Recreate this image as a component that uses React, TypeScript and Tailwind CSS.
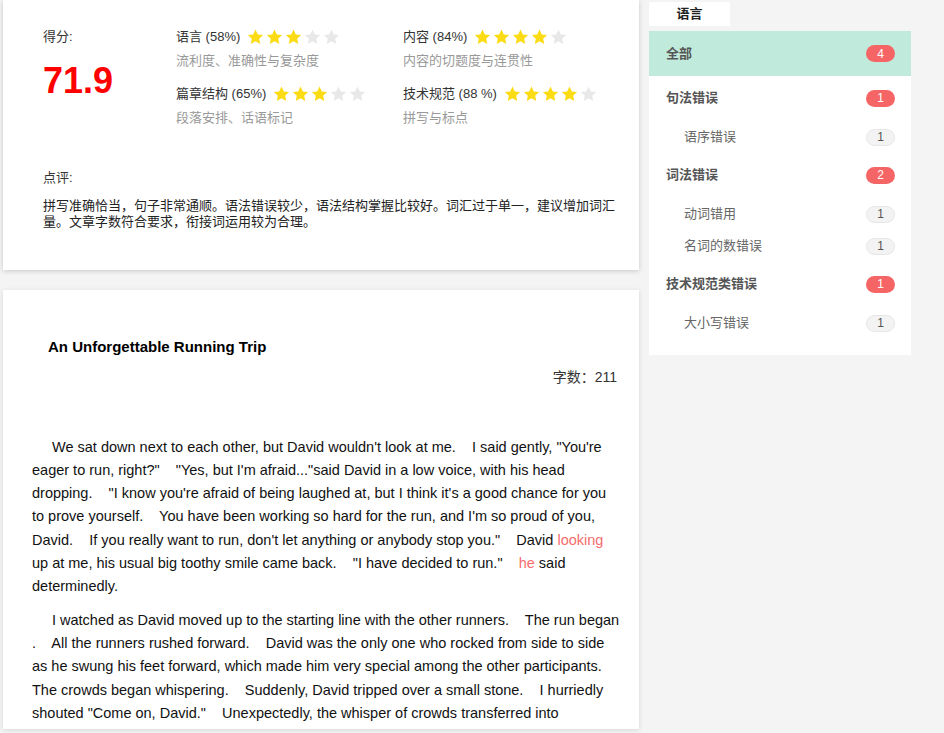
import React from 'react';

const cjk = { fontFamily: '"Liberation Sans", "Noto Sans CJK SC", sans-serif' };

function Star({ on }: { on: boolean }) {
  return (
    <svg width="17" height="16" viewBox="0 0 24 23" className="shrink-0">
      <path
        d="M12 0.8l3.3 7 7.6 0.9-5.6 5.2 1.5 7.6L12 17.7l-6.8 3.8 1.5-7.6L1.1 8.7l7.6-0.9z"
        fill={on ? '#fadb14' : '#e8e8e8'}
      />
    </svg>
  );
}

function Rating({ label, sub, n }: { label: string; sub: string; n: number }) {
  return (
    <div className="flex flex-col">
      <div className="flex items-center gap-[7px]">
        <span className="text-[13px] text-[#333]">{label}</span>
        <div className="flex gap-[2px]">
          {[0, 1, 2, 3, 4].map((i) => (
            <Star key={i} on={i < n} />
          ))}
        </div>
      </div>
      <div className="text-[13px] text-[#999] mt-[4px]">{sub}</div>
    </div>
  );
}

type Item = { name: string; count: number; level: 1 | 2 };

const items: Item[] = [
  { name: '句法错误', count: 1, level: 1 },
  { name: '语序错误', count: 1, level: 2 },
  { name: '词法错误', count: 2, level: 1 },
  { name: '动词错用', count: 1, level: 2 },
  { name: '名词的数错误', count: 1, level: 2 },
  { name: '技术规范类错误', count: 1, level: 1 },
  { name: '大小写错误', count: 1, level: 2 },
];

function Badge({ count, red }: { count: number; red: boolean }) {
  return (
    <span
      className={
        red
          ? 'w-[29px] h-[17px] rounded-full bg-[#f56565] text-white text-[12px] flex items-center justify-center'
          : 'w-[29px] h-[17px] rounded-full bg-[#f3f3f3] border border-[#e6e6e6] text-[#555] text-[12px] flex items-center justify-center'
      }
    >
      {count}
    </span>
  );
}

const sp = '\u00a0\u00a0\u00a0 ';

export default function App() {
  return (
    <div className="min-h-screen w-[944px] bg-[#f4f4f4] flex items-start" style={cjk}>
      <div className="ml-[3px] w-[636px] flex flex-col">
        <div className="bg-white h-[270px] shadow-[0_1px_5px_rgba(0,0,0,0.18)] pl-[40px] pr-[20px] pt-[27px]">
          <div className="flex">
            <div className="w-[133px] flex flex-col">
              <div className="text-[13px] text-[#333]">得分:</div>
              <div
                className="text-[36px] font-bold text-[#ff0000] mt-[16px] leading-none"
                style={{ fontFamily: '"Liberation Sans", Arial, sans-serif' }}
              >
                71.9
              </div>
            </div>
            <div className="grid grid-cols-[227px_1fr] gap-y-[14px]">
              <Rating label="语言 (58%)" sub="流利度、准确性与复杂度" n={3} />
              <Rating label="内容 (84%)" sub="内容的切题度与连贯性" n={4} />
              <Rating label="篇章结构 (65%)" sub="段落安排、话语标记" n={3} />
              <Rating label="技术规范 (88 %)" sub="拼写与标点" n={4} />
            </div>
          </div>
          <div className="mt-[41px] text-[13px] text-[#333]">点评:</div>
          <div className="mt-[10px] text-[13px] leading-[16px] text-[#222] w-[580px]">
            拼写准确恰当，句子非常通顺。语法错误较少，语法结构掌握比较好。词汇过于单一，建议增加词汇量。文章字数符合要求，衔接词运用较为合理。
          </div>
        </div>
        <div
          className="bg-white mt-[20px] h-[439px] overflow-hidden shadow-[0_1px_5px_rgba(0,0,0,0.12)] pl-[29px] pr-[18px] pt-[46px]"
          style={{ fontFamily: '"Liberation Sans", Arial, "Noto Sans CJK SC", sans-serif' }}
        >
          <div className="pl-[16px] text-[15px] font-bold text-black">An Unforgettable Running Trip</div>
          <div className="text-right text-[14px] text-[#333] mt-[8px] pr-[4px]">字数：211</div>
          <p className="mt-[48px] text-[14.5px] leading-[23.33px] text-[#111] indent-[20px]">
            We sat down next to each other, but David wouldn't look at me.{sp}I said gently, "You're eager to
            run, right?"{sp}"Yes, but I'm afraid..."said David in a low voice, with his head dropping.{sp}"I know
            you're afraid of being laughed at, but I think it's a good chance for you to prove yourself.{sp}You
            have been working so hard for the run, and I'm so proud of you, David.{sp}If you really want to run,
            don't let anything or anybody stop you."{sp}David <span className="text-[#f56c6c]">looking</span> up
            at me, his usual big toothy smile came back.{sp}"I have decided to run."{sp}
            <span className="text-[#f56c6c]">he</span> said determinedly.
          </p>
          <p className="mt-[10px] text-[14.5px] leading-[23.33px] text-[#111] indent-[20px]">
            I watched as David moved up to the starting line with the other runners.{sp}The run began .{sp}All
            the runners rushed forward.{sp}David was the only one who rocked from side to side as he swung his
            feet forward, which made him very special among the other participants.{sp}The crowds began
            whispering.{sp}Suddenly, David tripped over a small stone.{sp}I hurriedly shouted "Come on,
            David."{sp}Unexpectedly, the whisper of crowds transferred into cheering.
          </p>
        </div>
      </div>
      <div className="ml-[10px] w-[262px] flex flex-col pt-[2px]">
        <div className="w-[81px] h-[24px] bg-white flex items-center justify-center text-[13px] font-bold text-[#222]">
          语言
        </div>
        <div className="bg-white mt-[5px] pb-[16px]">
          <div className="h-[45px] bg-[#c0eadb] flex items-center justify-between pl-[17px] pr-[16px] mb-[1px]">
            <span className="text-[13px] font-bold text-[#555]">全部</span>
            <Badge count={4} red />
          </div>
          {items.map((it, i) => (
            <div
              key={i}
              className={
                it.level === 1
                  ? 'h-[32px] mt-[6px] mb-[7px] flex items-center justify-between pl-[17px] pr-[16px]'
                  : 'h-[32px] flex items-center justify-between pl-[35px] pr-[16px]'
              }
            >
              <span
                className={
                  it.level === 1 ? 'text-[13px] font-bold text-[#555]' : 'text-[13px] text-[#666]'
                }
              >
                {it.name}
              </span>
              <Badge count={it.count} red={it.level === 1} />
            </div>
          ))}
        </div>
      </div>
    </div>
  );
}
